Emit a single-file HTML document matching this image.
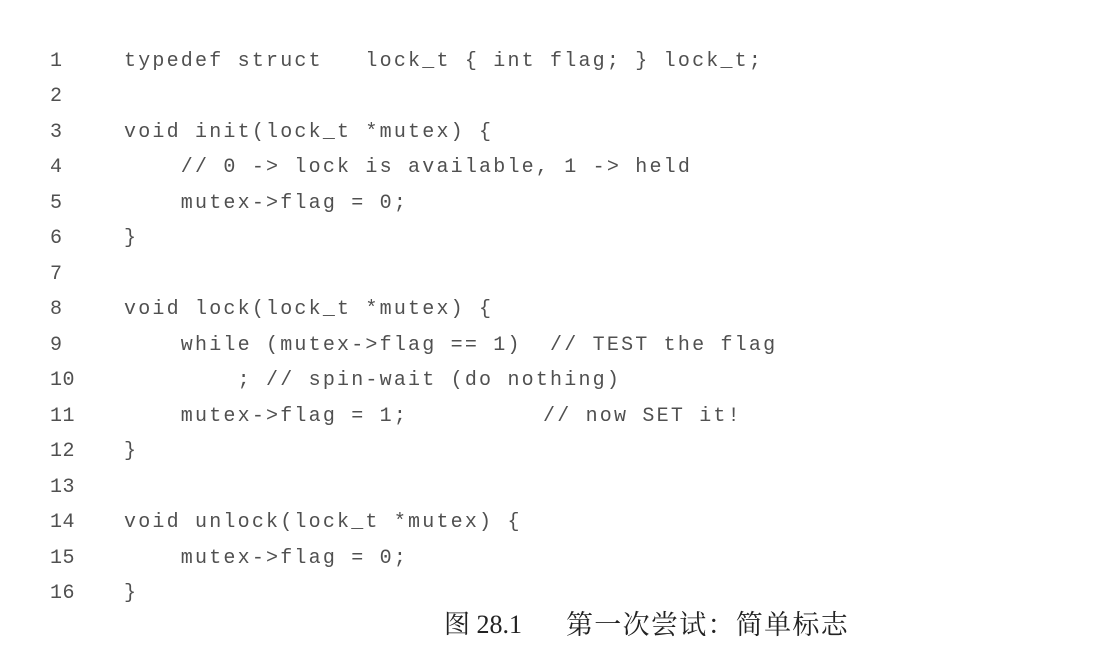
<!DOCTYPE html>
<html><head><meta charset="utf-8"><style>
html,body{margin:0;padding:0;background:#fff;width:1093px;height:665px;overflow:hidden;position:relative}
.l{position:absolute;font-family:"Liberation Mono","Courier New",monospace;font-size:20px;letter-spacing:2.2px;color:#505050;white-space:pre;line-height:24px;margin-top:2px}
.n{left:50px;letter-spacing:0.5px}
.c{left:124px}
.cap{position:absolute;top:608px;font-family:"Liberation Serif","Noto Serif CJK SC",serif;font-size:26px;color:#222;white-space:pre;line-height:34px}
</style></head><body>
<div class="l n" style="top:48px">1</div><div class="l c" style="top:48px">typedef struct   lock_t { int flag; } lock_t;</div>
<div class="l n" style="top:83px">2</div>
<div class="l n" style="top:119px">3</div><div class="l c" style="top:119px">void init(lock_t *mutex) {</div>
<div class="l n" style="top:154px">4</div><div class="l c" style="top:154px">    // 0 -> lock is available, 1 -> held</div>
<div class="l n" style="top:190px">5</div><div class="l c" style="top:190px">    mutex->flag = 0;</div>
<div class="l n" style="top:225px">6</div><div class="l c" style="top:225px">}</div>
<div class="l n" style="top:261px">7</div>
<div class="l n" style="top:296px">8</div><div class="l c" style="top:296px">void lock(lock_t *mutex) {</div>
<div class="l n" style="top:332px">9</div><div class="l c" style="top:332px">    while (mutex->flag == 1)  // TEST the flag</div>
<div class="l n" style="top:367px">10</div><div class="l c" style="top:367px">        ; // spin-wait (do nothing)</div>
<div class="l n" style="top:403px">11</div><div class="l c" style="top:403px">    mutex->flag = 1;</div><div class="l" style="top:403px;left:543px">// now SET it!</div>
<div class="l n" style="top:438px">12</div><div class="l c" style="top:438px">}</div>
<div class="l n" style="top:474px">13</div>
<div class="l n" style="top:509px">14</div><div class="l c" style="top:509px">void unlock(lock_t *mutex) {</div>
<div class="l n" style="top:545px">15</div><div class="l c" style="top:545px">    mutex->flag = 0;</div>
<div class="l n" style="top:580px">16</div><div class="l c" style="top:580px">}</div>
<div class="cap" style="left:444px">图 28.1</div>
<div class="cap" style="left:566px;letter-spacing:1.3px;font-size:27px">第一次尝试：简单标志</div>
</body></html>
